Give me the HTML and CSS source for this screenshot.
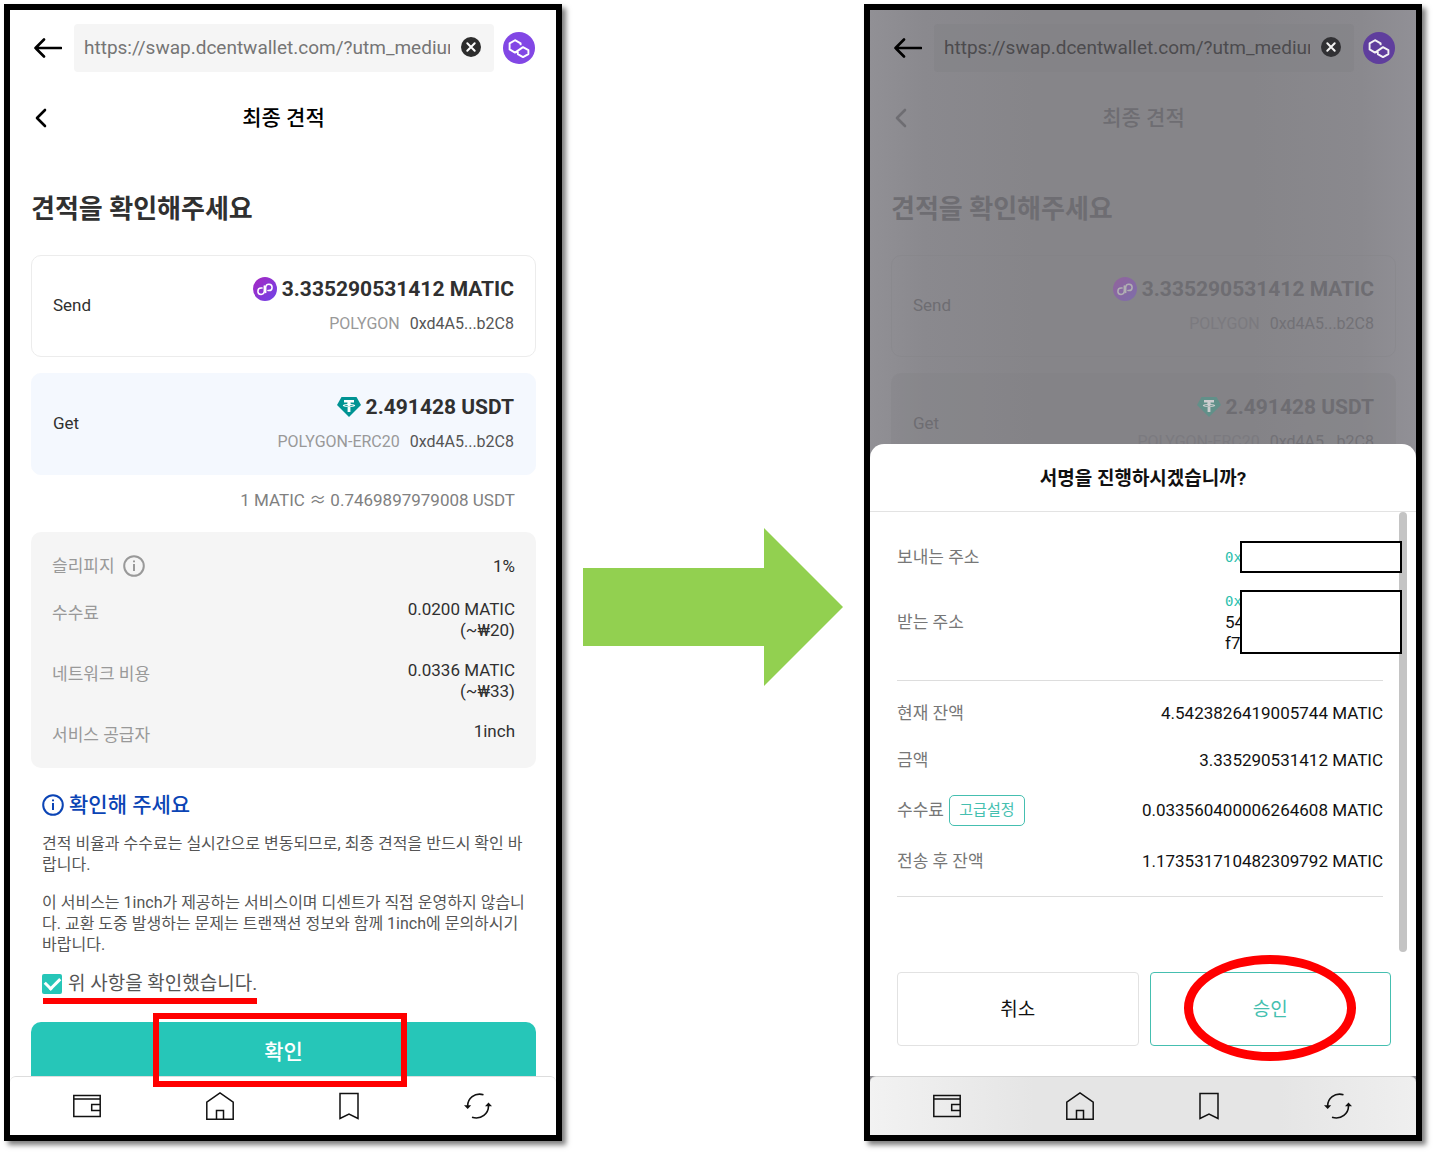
FILE: index.html
```html
<!DOCTYPE html>
<html lang="ko">
<head>
<meta charset="utf-8">
<title>최종 견적</title>
<link rel="stylesheet" href="styles.css">
</head>
<body>
<svg class="defs" width="0" height="0" aria-hidden="true">
  <defs>
    <linearGradient id="violet" x1="0" y1="0" x2="1" y2="1"><stop offset="0" stop-color="#a726c1"/><stop offset="1" stop-color="#6f45e8"/></linearGradient>
    <symbol id="i-back" viewBox="0 0 28 20"><path d="M10 1.500L1.500 10l8.500 8.500M1.500 10H27" fill="none" stroke="currentColor" stroke-width="2.600" stroke-linecap="round" stroke-linejoin="round"/></symbol>
    <symbol id="i-chevron" viewBox="0 0 12 20"><path d="M10 2L2 10l8 8" fill="none" stroke="currentColor" stroke-width="2.600" stroke-linecap="round" stroke-linejoin="round"/></symbol>
    <symbol id="i-clear" viewBox="0 0 20 20"><circle cx="10" cy="10" r="10" fill="currentColor"/><path d="M6.300 6.300l7.400 7.400M13.700 6.300l-7.400 7.400" stroke="#fff" stroke-width="2" stroke-linecap="round"/></symbol>
    <symbol id="i-chain" viewBox="0 0 32 32"><circle cx="16" cy="16" r="16" fill="currentColor"/><path d="M17.600 13.200v-1.900L12 8.200l-5.400 3.200v6L12 20.600l8-5.500 5.400 3v4l-5.400 3-5.200-3v-2.300" fill="none" stroke="#fff" stroke-width="1.900" stroke-linejoin="round"/></symbol>
    <symbol id="i-matic" viewBox="0 0 24 24"><circle cx="12" cy="12" r="12" class="matic-disc"/><path d="M12.700 15.500V10.300a3.200 3.200 0 1 1 3.200 3.300h-1M11.300 9v5.300a3.200 3.200 0 1 1-3.200-3.300h1" fill="none" stroke="#fff" stroke-width="1.500" stroke-linecap="round"/></symbol>
    <symbol id="i-tether" viewBox="0 0 24 20"><path d="M4.500 0h15L24 8 12 20 0 8z" fill="currentColor"/><path d="M7 3h10v2.600h-3.600v1.500c2.900.2 4.800.7 4.800 1.500s-1.900 1.300-4.800 1.500V15h-2.800v-4.900c-2.900-.2-4.800-.7-4.800-1.500s1.900-1.300 4.800-1.500V5.600H7z" fill="#fff"/><path d="M7.200 8.500c1.800.9 7.800.9 9.600 0-1.700-.7-7.900-.7-9.600 0z" fill="currentColor"/><path d="M10.600 5.500h2.800v3.600h-2.800z" fill="#fff"/></symbol>
    <symbol id="i-info" viewBox="0 0 22 22"><circle cx="11" cy="11" r="9.800" fill="none" stroke="currentColor" stroke-width="2"/><path d="M11 9v7M11 5.500v1.800" stroke="currentColor" stroke-width="2"/></symbol>
    <symbol id="i-wallet" viewBox="0 0 28 28"><path d="M.8 3.500h26.400v21H.8zM.8 7h26.400M27.200 12.500h-8.500v6h8.500" fill="none" stroke="currentColor" stroke-width="1.500"/></symbol>
    <symbol id="i-home" viewBox="0 0 28 28"><path d="M.8 10.200L14 1l13.200 9.200v17H.8zM10.500 27v-8.500h7V27" fill="none" stroke="currentColor" stroke-width="1.500"/></symbol>
    <symbol id="i-mark" viewBox="0 0 20 28"><path d="M1 1.500h18v25l-9-4.500-9 4.500z" fill="none" stroke="currentColor" stroke-width="1.500"/></symbol>
    <symbol id="i-sync" viewBox="0 0 28 28"><path d="M19.500 2.700C10.500.2 3.600 6.500 3.600 14M8 25.200c9.500 3 16.600-4.200 16.500-11.500" fill="none" stroke="currentColor" stroke-width="1.600"/><path d="M0 13.200h7.200L3.700 17zM21 14.200h7l-3.500-3.800z" fill="currentColor"/></symbol>
  </defs>
</svg>

<div class="guide">
  <section class="phone">
    <header class="browser">
      <button class="icon-button" type="button" aria-label="뒤로"><svg width="28" height="20"><use href="#i-back"/></svg></button>
      <div class="address">
        <input type="text" readonly aria-label="주소" value="https://swap.dcentwallet.com/?utm_medium=">
        <button class="icon-button clear" type="button" aria-label="지우기"><svg width="20" height="20"><use href="#i-clear"/></svg></button>
      </div>
      <button class="icon-button chain" type="button" aria-label="Polygon"><svg width="32" height="32"><use href="#i-chain"/></svg></button>
    </header>
    <main class="content">
      <div class="titlebar">
        <button class="icon-button" type="button" aria-label="이전"><svg width="12" height="20"><use href="#i-chevron"/></svg></button>
        <h1>최종 견적</h1>
      </div>
      <h2 class="headline">견적을 확인해주세요</h2>
      <article class="card">
        <span>Send</span>
        <div class="asset">
          <strong><svg width="24" height="24"><use href="#i-matic"/></svg>3.335290531412 MATIC</strong>
          <p><span class="network">POLYGON</span><span>0xd4A5...b2C8</span></p>
        </div>
      </article>
      <article class="card get">
        <span>Get</span>
        <div class="asset">
          <strong><svg class="tether" width="24" height="20"><use href="#i-tether"/></svg>2.491428 USDT</strong>
          <p><span class="network">POLYGON-ERC20</span><span>0xd4A5...b2C8</span></p>
        </div>
      </article>
      <p class="rate">1 MATIC <span class="approx">≈</span> 0.7469897979008 USDT</p>
      <dl class="costs">
        <div><dt>슬리피지 <svg width="22" height="22"><use href="#i-info"/></svg></dt><dd class="single">1%</dd></div>
        <div><dt>수수료</dt><dd>0.0200 MATIC<br>(~₩20)</dd></div>
        <div><dt>네트워크 비용</dt><dd>0.0336 MATIC<br>(~₩33)</dd></div>
        <div><dt>서비스 공급자</dt><dd>1inch</dd></div>
      </dl>
      <section class="notice">
        <h3><svg width="22" height="22"><use href="#i-info"/></svg>확인해 주세요</h3>
        <p>견적 비율과 수수료는 실시간으로 변동되므로, 최종 견적을 반드시 확인 바랍니다.</p>
        <p>이 서비스는 1inch가 제공하는 서비스이며 디센트가 직접 운영하지 않습니다. 교환 도중 발생하는 문제는 트랜잭션 정보와 함께 1inch에 문의하시기 바랍니다.</p>
        <div class="agree"><input id="agree" type="checkbox" checked><label for="agree">위 사항을 확인했습니다.</label></div>
      </section>
      <div class="confirm"><button type="button">확인</button></div>
    </main>
    <nav class="tabs">
      <a href="#wallet" aria-label="지갑"><svg width="28" height="28"><use href="#i-wallet"/></svg></a>
      <a href="#home" aria-label="홈"><svg width="28" height="28"><use href="#i-home"/></svg></a>
      <a href="#bookmarks" aria-label="북마크"><svg width="20" height="28"><use href="#i-mark"/></svg></a>
      <a href="#reload" aria-label="새로고침"><svg width="28" height="28"><use href="#i-sync"/></svg></a>
    </nav>
  </section>

  <svg class="arrow" viewBox="0 0 260 158" aria-hidden="true"><path d="M0 40h181V0l79 79-79 79v-40H0z" fill="#92d050"/></svg>

  <section class="phone dimmed">
    <header class="browser">
      <button class="icon-button" type="button" aria-label="뒤로"><svg width="28" height="20"><use href="#i-back"/></svg></button>
      <div class="address">
        <input type="text" readonly aria-label="주소" value="https://swap.dcentwallet.com/?utm_medium=">
        <button class="icon-button clear" type="button" aria-label="지우기"><svg width="20" height="20"><use href="#i-clear"/></svg></button>
      </div>
      <button class="icon-button chain" type="button" aria-label="Polygon"><svg width="32" height="32"><use href="#i-chain"/></svg></button>
    </header>
    <main class="content">
      <div class="titlebar">
        <button class="icon-button" type="button" aria-label="이전"><svg width="12" height="20"><use href="#i-chevron"/></svg></button>
        <h1>최종 견적</h1>
      </div>
      <h2 class="headline">견적을 확인해주세요</h2>
      <article class="card">
        <span>Send</span>
        <div class="asset">
          <strong><svg width="24" height="24"><use href="#i-matic"/></svg>3.335290531412 MATIC</strong>
          <p><span class="network">POLYGON</span><span>0xd4A5...b2C8</span></p>
        </div>
      </article>
      <article class="card get">
        <span>Get</span>
        <div class="asset">
          <strong><svg class="tether" width="24" height="20"><use href="#i-tether"/></svg>2.491428 USDT</strong>
          <p><span class="network">POLYGON-ERC20</span><span>0xd4A5...b2C8</span></p>
        </div>
      </article>
      <div class="sheet" role="dialog" aria-labelledby="sheet-title">
        <h2 id="sheet-title">서명을 진행하시겠습니까?</h2>
        <div class="sheet-body">
          <dl class="addresses">
            <div><dt>보내는 주소</dt><dd><span class="hex">0x</span></dd></div>
            <div class="tall"><dt>받는 주소</dt><dd><span class="hex">0x</span><br>54<br>f7</dd></div>
          </dl>
          <dl class="amounts">
            <div><dt>현재 잔액</dt><dd>4.5423826419005744 MATIC</dd></div>
            <div><dt>금액</dt><dd>3.335290531412 MATIC</dd></div>
            <div><dt>수수료 <button type="button">고급설정</button></dt><dd>0.033560400006264608 MATIC</dd></div>
            <div><dt>전송 후 잔액</dt><dd>1.173531710482309792 MATIC</dd></div>
          </dl>
        </div>
        <div class="actions">
          <button type="button">취소</button>
          <div class="approve"><button type="button">승인</button></div>
        </div>
      </div>
    </main>
    <nav class="tabs">
      <a href="#wallet" aria-label="지갑"><svg width="28" height="28"><use href="#i-wallet"/></svg></a>
      <a href="#home" aria-label="홈"><svg width="28" height="28"><use href="#i-home"/></svg></a>
      <a href="#bookmarks" aria-label="북마크"><svg width="20" height="28"><use href="#i-mark"/></svg></a>
      <a href="#reload" aria-label="새로고침"><svg width="28" height="28"><use href="#i-sync"/></svg></a>
    </nav>
  </section>
</div>
</body>
</html>
```
FILE: styles.css
```css
* { box-sizing: border-box; }
body, h1, h2, h3, p, dl, dd { margin: 0; }
body {
  background: #fff;
  color: #303030;
  font: 17px/21px Roboto, "Noto Sans CJK KR", sans-serif;
}
button, input { font: inherit; color: inherit; }
button { padding: 0; border: 0; background: none; }
svg { display: block; flex: none; }
.defs { position: absolute; }

.guide {
  display: grid;
  grid-template-columns: minmax(0, 1fr) 260px minmax(0, 1fr);
  gap: 21px;
  padding: 4px 13px 13px 4px;
}
.arrow { align-self: center; width: 100%; margin-top: 68px; }

.phone {
  display: flex;
  flex-direction: column;
  border: 6px solid #000;
  background: #fff;
  box-shadow: 4px 4px 5px rgba(0, 0, 0, .5);
}

/* Browser bar */
.browser { display: flex; align-items: center; padding: 14px 21px 14px 24px; color: #000; }
.icon-button { display: block; flex: none; }
.address {
  display: flex;
  flex: 1;
  align-items: center;
  gap: 11px;
  min-width: 0;
  height: 48px;
  margin: 0 9px 0 12px;
  padding: 0 13px 2px 10px;
  border-radius: 4px;
  background: #f5f5f5;
}
.address input {
  flex: 1;
  min-width: 0;
  padding: 0;
  border: 0;
  background: none;
  color: #757575;
  font-size: 19px;
}
.clear { color: #2d2d2d; }
.chain { color: #8247e5; }

/* Quote page */
.content { position: relative; flex: 1; padding: 0 20px 0 21px; }
.titlebar { display: grid; grid-template-columns: 12px 1fr 12px; align-items: center; height: 64px; padding: 0 4px; color: #000; }
.titlebar h1 { font-size: 21px; font-weight: 500; line-height: 28px; text-align: center; }
.headline { margin: 41px 0 28px; font-size: 26px; line-height: 36px; font-weight: 700; }
.card {
  display: flex;
  align-items: center;
  justify-content: space-between;
  min-height: 102px;
  margin-bottom: 16px;
  padding: 0 21px 2px;
  border: 1px solid #ececec;
  border-radius: 10px;
}
.card.get { margin-bottom: 13px; border-color: #f4f8fe; background: #f4f8fe; }
.asset { display: grid; gap: 10px; }
.asset strong { display: flex; align-items: center; justify-content: flex-end; gap: 5px; font-size: 21px; line-height: 28px; }
.asset p { display: flex; justify-content: flex-end; gap: 10px; color: #555; font-size: 16px; line-height: 22px; }
.asset .network { color: #999; }
.matic-disc { fill: url(#violet); }
.tether { color: #009393; }
.rate { margin-bottom: 20px; padding-right: 21px; color: #808080; font-size: 17px; line-height: 24px; text-align: right; }
.approx { font-family: "Noto Sans CJK KR", sans-serif; line-height: 1; }

.costs { display: grid; gap: 19px; padding: 20px 21px 19px; border-radius: 10px; background: #f5f5f5; }
.costs div { display: flex; justify-content: space-between; }
.costs dt { display: flex; align-items: center; gap: 8px; height: 28px; color: #999; line-height: 28px; }
.costs dd { text-align: right; }
.costs .single { line-height: 28px; }

.notice { display: flex; flex-direction: column; padding: 23px 6px 24px 11px; color: #555; font-size: 16px; }
.notice h3 { display: flex; align-items: center; gap: 5px; color: #0b44b5; font-size: 21px; font-weight: 500; line-height: 28px; }
.notice p { margin-top: 14px; word-break: break-all; }
.notice p + p { margin-top: 17px; }
.agree { position: relative; display: flex; align-self: flex-start; align-items: center; gap: 6px; margin-top: 15px; font-size: 19px; line-height: 28px; }
.agree::after { content: ""; position: absolute; inset: 100% 0 auto 1px; height: 6px; background: #f00; }
.agree input { display: grid; place-items: center; width: 20px; height: 20px; margin: 0; border-radius: 2px; background: #26c6b8; appearance: none; }
.agree input::before { content: ""; width: 12px; height: 7px; margin-bottom: 4px; border: solid #fff; border-width: 0 0 3px 3px; rotate: -45deg; }

.confirm { position: relative; }
.confirm button { display: block; width: 100%; height: 54px; padding-top: 6px; border-radius: 10px 10px 0 0; background: #26c6b8; color: #fff; font-size: 21px; font-weight: 500; }
.confirm::after { content: ""; position: absolute; z-index: 1; inset: -9px 129px -11px 122px; border: 6px solid #f00; }

.tabs { display: flex; align-items: center; justify-content: space-between; height: 59px; padding: 0 64px 0 63px; border-top: 1px solid #ddd; border-radius: 6px 6px 0 0; background: #fff; }
.tabs a { color: #111; }

/* Page behind the open sheet */
.dimmed { background: linear-gradient(90deg, #919095, #8a898e 10%, #868589 30%, #868589 70%, #8a898e 90%, #919096); }
.dimmed .address { background: rgba(130, 129, 133, .5); }
.dimmed .address input { color: #4c4b4e; }
.dimmed .clear { color: #29282b; }
.dimmed .chain { color: #5b369f; }
.dimmed .clear svg, .dimmed .chain svg { opacity: .9; }
.dimmed .titlebar, .dimmed .headline, .dimmed .card { color: #6e6d72; }
.dimmed .card { border-color: rgba(130, 129, 133, .3); }
.dimmed .card.get { border-color: transparent; background: rgba(130, 129, 133, .3); }
.dimmed .asset p { color: #727176; }
.dimmed .asset .network { color: #7b7a7f; }
.dimmed .matic-disc { fill: #8246b8; }
.dimmed .asset svg { opacity: .35; }
.dimmed .asset .tether { color: #4b9a8b; opacity: .6; }
.dimmed .tabs { border-color: #d5d5d5; background: linear-gradient(90deg, #f2f2f2, #e5e5e5 30%, #e5e5e5 75%, #efefef); }

/* Signature sheet */
.sheet { position: absolute; inset: auto 0 0; border-radius: 14px 14px 0 0; background: #fff; color: #111; }
.sheet h2 { padding: 21px 0 18px; border-bottom: 1px solid #e3e3e3; font-size: 19px; line-height: 28px; font-weight: 700; text-align: center; }
.sheet-body { position: relative; padding: 29px 33px 55px 27px; }
.sheet-body::before { content: ""; position: absolute; inset: 0 9px 0 auto; width: 8px; border-radius: 4px; background: #c4c4c4; }
.sheet dl { display: grid; border-bottom: 1px solid #ddd; }
.sheet dl div { display: flex; align-items: center; justify-content: space-between; min-height: 24px; }
.sheet dt { display: flex; align-items: center; gap: 5px; color: #777; }
.addresses { gap: 17px; padding-bottom: 26px; }
.sheet .addresses div { min-height: 32px; }
.addresses .tall { min-height: 64px; }
.addresses dd { position: relative; align-self: stretch; align-content: center; width: 158px; }
.addresses dd::after { content: ""; position: absolute; inset: 0 -19px 0 15px; border: 2px solid #000; background: #fff; }
.hex { color: #2dbfae; font: 14px/21px "DejaVu Sans Mono", monospace; }
.amounts { gap: 23px; padding: 20px 0 23px; }
.amounts button { width: 76px; height: 31px; border: 1px solid #45bfb0; border-radius: 5px; color: #45bfb0; font-size: 15px; }
.actions { display: grid; grid-template-columns: 1fr 1fr; gap: 11px; padding: 20px 25px 30px 27px; }
.actions button { width: 100%; height: 74px; border: 1px solid #e2e2e2; border-radius: 4px; font-size: 19px; }
.approve { position: relative; }
.actions .approve button { border-color: #45bfb0; color: #45bfb0; }
.approve::after { content: ""; position: absolute; inset: -17px 35px -15px 34px; border: 9px solid #f00; border-radius: 50%; }
```
